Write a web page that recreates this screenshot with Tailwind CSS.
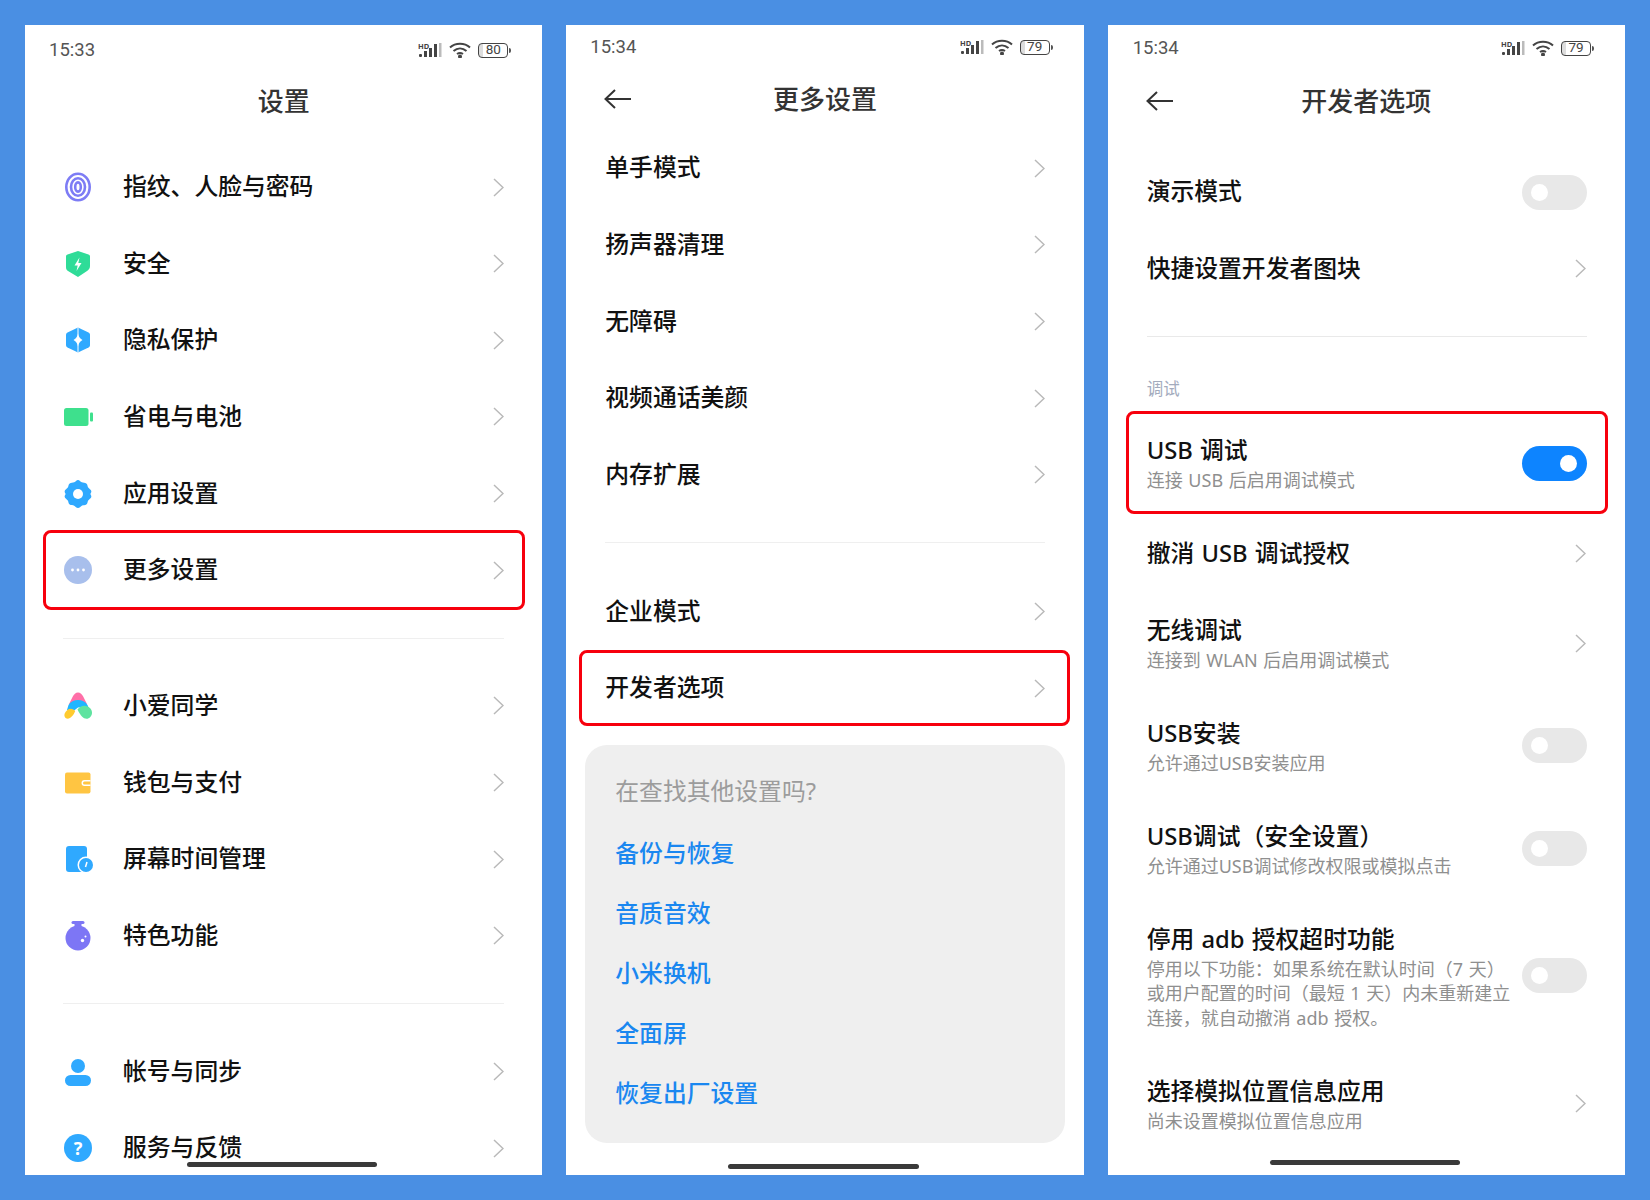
<!DOCTYPE html>
<html lang="zh-CN">
<head>
  <meta charset="UTF-8" />
  <meta name="viewport" content="width=device-width, initial-scale=1.0" />
  <title>设置 - 开发者选项</title>
  <script src="https://cdn.jsdelivr.net/npm/@tailwindcss/browser@4"></script>
</head>
<body class="bg-[#4a8fe3] font-['Noto_Sans','Noto_Sans_CJK_SC',sans-serif]">
<div class="flex gap-[24px] p-[25px] h-[1200px]">

  <!-- Panel 1: settings -->
  <section class="relative flex-1 h-[1150px] bg-white overflow-hidden">
    <div class="flex items-center justify-between h-[50px] pl-[24px] pr-[31px]">
      <span class="font-['Roboto'] text-[18.5px] text-[#555] translate-y-[1px]">15:33</span>
      <div class="flex items-center gap-[7px]">
        <svg width="24" height="16" viewBox="0 0 24 16"><text x="0" y="7" font-size="7.5" font-weight="700" fill="#444">HD</text><g fill="#444"><rect x="1" y="12" width="3" height="3" rx="1"/><rect x="6" y="9" width="3" height="6"/><rect x="11" y="6" width="3" height="9"/><rect x="16" y="2" width="3" height="13"/></g><rect x="21" y="1" width="2.5" height="14" fill="#bbb"/></svg>
        <svg width="22" height="16" viewBox="0 0 22 16" fill="none" stroke="#444" stroke-width="2"><path d="M1 5.5C6.5 .5 15.5 .5 21 5.5"/><path d="M4.5 9C8.5 5.5 13.5 5.5 17.5 9"/><path d="M8 12C9.8 10.7 12.2 10.7 14 12"/><circle cx="11" cy="14.5" r="1" fill="#444"/></svg>
        <div class="flex items-center">
          <div class="flex items-center justify-center w-[30px] h-[15px] rounded-[4px] border border-[#444] bg-[linear-gradient(90deg,#ddd_0,#ddd_15%,#fff_15%)] font-['Roboto'] text-[13.5px] leading-none text-[#444]">80</div>
          <div class="w-[2px] h-[5px] bg-[#555] rounded-r-sm ml-[1px]"></div>
        </div>
      </div>
    </div>
    <header class="flex items-center justify-center h-[52px] text-[26px] font-medium text-[#333]">设置</header>

    <div class="mt-[21.7px]">
      <div class="flex items-center h-[76.67px] px-[38px]">
        <svg class="w-[30px] h-[30px] shrink-0" viewBox="0 0 30 30" fill="none" stroke="#7d7cf5" stroke-width="2.6"><ellipse cx="15" cy="15" rx="11.7" ry="13.3"/><ellipse cx="15" cy="15" rx="7" ry="8.8"/><ellipse cx="15" cy="15" rx="2.8" ry="4.6"/></svg>
        <span class="ml-[30px] flex-1 text-[23.8px] font-medium text-[#111]">指纹、人脸与密码</span>
        <svg class="w-[11px] h-[19px] shrink-0" viewBox="0 0 11 19" fill="none" stroke="#b9b9b9" stroke-width="1.5"><path d="M1 1l9 8.5-9 8.5"/></svg>
      </div>
      <div class="flex items-center h-[76.67px] px-[38px]">
        <svg class="w-[30px] h-[30px] shrink-0" viewBox="0 0 30 30"><path d="M15 2l10.5 3.6c.9.3 1.5 1.1 1.5 2V17c0 2-1 3.6-2.6 4.8L15 28 4.6 21.8C3 20.6 3 19 3 17V7.6c0-.9.6-1.7 1.5-2z" fill="#2fdc98"/><path d="M16.5 8.5l-5 8h3.2l-1.2 5.5 5-8h-3.2z" fill="#fff"/></svg>
        <span class="ml-[30px] flex-1 text-[23.8px] font-medium text-[#111]">安全</span>
        <svg class="w-[11px] h-[19px] shrink-0" viewBox="0 0 11 19" fill="none" stroke="#b9b9b9" stroke-width="1.5"><path d="M1 1l9 8.5-9 8.5"/></svg>
      </div>
      <div class="flex items-center h-[76.67px] px-[38px]">
        <svg class="w-[30px] h-[30px] shrink-0" viewBox="0 0 30 30"><path d="M15 2.5l10.5 5c1 .5 1.5 1.3 1.5 2.4v10.2c0 1.1-.5 1.9-1.5 2.4L15 27.5 4.5 22.5C3.5 22 3 21.2 3 20.1V9.9c0-1.1.5-1.9 1.5-2.4z" fill="#2fa9ff"/><path d="M15 2.5v25" stroke="#fff" stroke-width="1"/><path d="M15 8.5c.5 3 1.8 5 4.5 6.5-2.7 1.5-4 3.5-4.5 6.5-.5-3-1.8-5-4.5-6.5 2.7-1.5 4-3.5 4.5-6.5z" fill="#fff"/></svg>
        <span class="ml-[30px] flex-1 text-[23.8px] font-medium text-[#111]">隐私保护</span>
        <svg class="w-[11px] h-[19px] shrink-0" viewBox="0 0 11 19" fill="none" stroke="#b9b9b9" stroke-width="1.5"><path d="M1 1l9 8.5-9 8.5"/></svg>
      </div>
      <div class="flex items-center h-[76.67px] px-[38px]">
        <svg class="w-[30px] h-[30px] shrink-0" viewBox="0 0 30 30"><rect x="1" y="6" width="24.5" height="18" rx="2.5" fill="#3ee08d"/><rect x="27" y="10.5" width="3" height="9" rx="1" fill="#3ee08d"/></svg>
        <span class="ml-[30px] flex-1 text-[23.8px] font-medium text-[#111]">省电与电池</span>
        <svg class="w-[11px] h-[19px] shrink-0" viewBox="0 0 11 19" fill="none" stroke="#b9b9b9" stroke-width="1.5"><path d="M1 1l9 8.5-9 8.5"/></svg>
      </div>
      <div class="flex items-center h-[76.67px] px-[38px]">
        <svg class="w-[30px] h-[30px] shrink-0" viewBox="0 0 30 30"><path d="M15 1c1.6 0 2.4 1.6 3.8 2.3 1.4.7 3.2.2 4.5 1.100 1.3.9 1.100 2.700 1.900 4.100.8 1.300 2.800 1.900 3.100 3.500.3 1.600-.8 2-.8 3s1.100 1.400.8 3c-.3 1.600-2.300 2.200-3.100 3.500-.8 1.400-.6 3.200-1.900 4.100-1.300.9-3.100.4-4.500 1.100C17.400 27.400 16.600 29 15 29s-2.400-1.600-3.800-2.300c-1.400-.7-3.200-.2-4.500-1.100-1.300-.9-1.100-2.700-1.900-4.100-.8-1.300-2.800-1.900-3.100-3.500-.3-1.600.8-2 .8-3s-1.100-1.400-.8-3c.3-1.600 2.300-2.200 3.100-3.500.8-1.400.6-3.200 1.900-4.100 1.300-.9 3.100-.4 4.500-1.100C12.600 2.600 13.400 1 15 1z" fill="#2fa9ff"/><circle cx="15" cy="15" r="5" fill="#fff"/></svg>
        <span class="ml-[30px] flex-1 text-[23.8px] font-medium text-[#111]">应用设置</span>
        <svg class="w-[11px] h-[19px] shrink-0" viewBox="0 0 11 19" fill="none" stroke="#b9b9b9" stroke-width="1.5"><path d="M1 1l9 8.5-9 8.5"/></svg>
      </div>
      <div class="relative flex items-center h-[76.67px] px-[38px]">
        <svg class="w-[30px] h-[30px] shrink-0" viewBox="0 0 30 30"><circle cx="15" cy="15" r="14" fill="#a8bfec"/><circle cx="9.5" cy="15" r="1.4" fill="#fff"/><circle cx="15" cy="15" r="1.4" fill="#fff"/><circle cx="20.5" cy="15" r="1.4" fill="#fff"/></svg>
        <span class="ml-[30px] flex-1 text-[23.8px] font-medium text-[#111]">更多设置</span>
        <svg class="w-[11px] h-[19px] shrink-0" viewBox="0 0 11 19" fill="none" stroke="#b9b9b9" stroke-width="1.5"><path d="M1 1l9 8.5-9 8.5"/></svg>
        <div class="absolute top-[-2px] bottom-[-1.5px] left-[18px] right-[17px] border-[3px] border-[#f7000d] rounded-[8px]"></div>
      </div>
    </div>

    <div class="mt-[29px] mx-[38px] h-px bg-[#efefef]"></div>

    <div class="mt-[29px]">
      <div class="flex items-center h-[76.67px] px-[38px]">
        <svg class="w-[30px] h-[30px] shrink-0" viewBox="0 0 30 30"><path d="M15 1.5c2.4 0 4 1.7 5.2 4l4 8-18.4 0 4-8c1.2-2.3 2.8-4 5.2-4z" fill="#ff6fa8"/><path d="M5.5 14c2-3.5 5.5-5 9.5-5s7.5 1.5 9.5 5l1.5 3.5-6-1.5-5 .5-4.5 3.5-6.5-1z" fill="#1fb6ff"/><path d="M14.5 18.5c2-2.6 4.2-3.8 6.8-3.8 4 0 7.7 3 7.7 7 0 3.3-2.6 6-5.5 6-3.2 0-6-3-9-9.2z" fill="#5fe3a0"/><path d="M1.7 22.5c1-2.7 3.5-4.8 6-4.8 2 0 3.5 1 4.5 2.3-1.5 4-4.5 7.7-7.5 7.7-2.6 0-3.9-2.5-3-5.2z" fill="#ffcb2f"/></svg>
        <span class="ml-[30px] flex-1 text-[23.8px] font-medium text-[#111]">小爱同学</span>
        <svg class="w-[11px] h-[19px] shrink-0" viewBox="0 0 11 19" fill="none" stroke="#b9b9b9" stroke-width="1.5"><path d="M1 1l9 8.5-9 8.5"/></svg>
      </div>
      <div class="flex items-center h-[76.67px] px-[38px]">
        <svg class="w-[30px] h-[30px] shrink-0" viewBox="0 0 30 30"><rect x="2" y="4.5" width="25.5" height="21" rx="2" fill="#ffc542"/><path d="M27.5 12h-6a3 3 0 0 0 0 6h6v-1.5h-6a1.5 1.5 0 0 1 0-3h6z" fill="#fff"/></svg>
        <span class="ml-[30px] flex-1 text-[23.8px] font-medium text-[#111]">钱包与支付</span>
        <svg class="w-[11px] h-[19px] shrink-0" viewBox="0 0 11 19" fill="none" stroke="#b9b9b9" stroke-width="1.5"><path d="M1 1l9 8.5-9 8.5"/></svg>
      </div>
      <div class="flex items-center h-[76.67px] px-[38px]">
        <svg class="w-[30px] h-[30px] shrink-0" viewBox="0 0 30 30"><rect x="3" y="2" width="21" height="26" rx="3" fill="#2fa9ff"/><circle cx="23" cy="21" r="8.5" fill="#fff"/><circle cx="23" cy="21" r="7" fill="#2fa9ff"/><path d="M24 18l-1.5 5" stroke="#fff" stroke-width="1.5" fill="none"/></svg>
        <span class="ml-[30px] flex-1 text-[23.8px] font-medium text-[#111]">屏幕时间管理</span>
        <svg class="w-[11px] h-[19px] shrink-0" viewBox="0 0 11 19" fill="none" stroke="#b9b9b9" stroke-width="1.5"><path d="M1 1l9 8.5-9 8.5"/></svg>
      </div>
      <div class="flex items-center h-[76.67px] px-[38px]">
        <svg class="w-[30px] h-[30px] shrink-0" viewBox="0 0 30 30"><rect x="8.5" y="0" width="13" height="3" rx="1.5" fill="#7d76f5"/><rect x="11.5" y="2" width="7" height="6" fill="#7d76f5"/><circle cx="15" cy="17" r="12.5" fill="#7d76f5"/><circle cx="19.5" cy="19.5" r="1.7" fill="#fff"/><circle cx="22.5" cy="15.5" r="1" fill="#fff"/></svg>
        <span class="ml-[30px] flex-1 text-[23.8px] font-medium text-[#111]">特色功能</span>
        <svg class="w-[11px] h-[19px] shrink-0" viewBox="0 0 11 19" fill="none" stroke="#b9b9b9" stroke-width="1.5"><path d="M1 1l9 8.5-9 8.5"/></svg>
      </div>
    </div>

    <div class="mt-[29px] mx-[38px] h-px bg-[#efefef]"></div>

    <div class="mt-[29px]">
      <div class="flex items-center h-[76.67px] px-[38px]">
        <svg class="w-[30px] h-[30px] shrink-0" viewBox="0 0 30 30"><circle cx="15" cy="9" r="7" fill="#2fa9ff"/><rect x="2" y="18" width="26" height="11" rx="5.5" fill="#2fa9ff"/></svg>
        <span class="ml-[30px] flex-1 text-[23.8px] font-medium text-[#111]">帐号与同步</span>
        <svg class="w-[11px] h-[19px] shrink-0" viewBox="0 0 11 19" fill="none" stroke="#b9b9b9" stroke-width="1.5"><path d="M1 1l9 8.5-9 8.5"/></svg>
      </div>
      <div class="flex items-center h-[76.67px] px-[38px]">
        <svg class="w-[30px] h-[30px] shrink-0" viewBox="0 0 30 30"><circle cx="15" cy="15" r="14" fill="#2fa9ff"/><text x="15" y="21.5" text-anchor="middle" font-size="18" font-weight="700" fill="#fff">?</text></svg>
        <span class="ml-[30px] flex-1 text-[23.8px] font-medium text-[#111]">服务与反馈</span>
        <svg class="w-[11px] h-[19px] shrink-0" viewBox="0 0 11 19" fill="none" stroke="#b9b9b9" stroke-width="1.5"><path d="M1 1l9 8.5-9 8.5"/></svg>
      </div>
    </div>
    <div class="absolute bottom-[8px] left-[162px] w-[190px] h-[5px] rounded-full bg-[#3a3a3a]"></div>
  </section>

  <!-- Panel 2: more settings -->
  <section class="relative flex-1 h-[1150px] bg-white overflow-hidden">
    <div class="flex items-center justify-between h-[44px] pl-[24px] pr-[31px]">
      <span class="font-['Roboto'] text-[18.5px] text-[#555] translate-y-[1px]">15:34</span>
      <div class="flex items-center gap-[7px]">
        <svg width="24" height="16" viewBox="0 0 24 16"><text x="0" y="7" font-size="7.5" font-weight="700" fill="#444">HD</text><g fill="#444"><rect x="1" y="12" width="3" height="3" rx="1"/><rect x="6" y="9" width="3" height="6"/><rect x="11" y="6" width="3" height="9"/><rect x="16" y="2" width="3" height="13"/></g><rect x="21" y="1" width="2.5" height="14" fill="#bbb"/></svg>
        <svg width="22" height="16" viewBox="0 0 22 16" fill="none" stroke="#444" stroke-width="2"><path d="M1 5.5C6.5 .5 15.5 .5 21 5.5"/><path d="M4.5 9C8.5 5.5 13.5 5.5 17.5 9"/><path d="M8 12C9.8 10.7 12.2 10.7 14 12"/><circle cx="11" cy="14.5" r="1" fill="#444"/></svg>
        <div class="flex items-center">
          <div class="flex items-center justify-center w-[30px] h-[15px] rounded-[4px] border border-[#444] bg-[linear-gradient(90deg,#ddd_0,#ddd_15%,#fff_15%)] font-['Roboto'] text-[13.5px] leading-none text-[#444]">79</div>
          <div class="w-[2px] h-[5px] bg-[#555] rounded-r-sm ml-[1px]"></div>
        </div>
      </div>
    </div>
    <header class="grid grid-cols-[1fr_auto_1fr] items-center h-[60px] pl-[38px] text-[26px] font-medium text-[#333]">
      <svg class="w-[28px] h-[20px]" viewBox="0 0 28 20" fill="none" stroke="#333" stroke-width="2"><path d="M27 10H2M11 1l-9.5 9 9.5 9"/></svg>
      <span class="-ml-[38px]">更多设置</span>
    </header>

    <div class="mt-[1px]">
      <div class="flex items-center justify-between h-[76.67px] px-[39px] text-[23.8px] font-medium text-[#111]">单手模式
        <svg class="w-[11px] h-[19px]" viewBox="0 0 11 19" fill="none" stroke="#b9b9b9" stroke-width="1.5"><path d="M1 1l9 8.5-9 8.5"/></svg>
      </div>
      <div class="flex items-center justify-between h-[76.67px] px-[39px] text-[23.8px] font-medium text-[#111]">扬声器清理
        <svg class="w-[11px] h-[19px]" viewBox="0 0 11 19" fill="none" stroke="#b9b9b9" stroke-width="1.5"><path d="M1 1l9 8.5-9 8.5"/></svg>
      </div>
      <div class="flex items-center justify-between h-[76.67px] px-[39px] text-[23.8px] font-medium text-[#111]">无障碍
        <svg class="w-[11px] h-[19px]" viewBox="0 0 11 19" fill="none" stroke="#b9b9b9" stroke-width="1.5"><path d="M1 1l9 8.5-9 8.5"/></svg>
      </div>
      <div class="flex items-center justify-between h-[76.67px] px-[39px] text-[23.8px] font-medium text-[#111]">视频通话美颜
        <svg class="w-[11px] h-[19px]" viewBox="0 0 11 19" fill="none" stroke="#b9b9b9" stroke-width="1.5"><path d="M1 1l9 8.5-9 8.5"/></svg>
      </div>
      <div class="flex items-center justify-between h-[76.67px] px-[39px] text-[23.8px] font-medium text-[#111]">内存扩展
        <svg class="w-[11px] h-[19px]" viewBox="0 0 11 19" fill="none" stroke="#b9b9b9" stroke-width="1.5"><path d="M1 1l9 8.5-9 8.5"/></svg>
      </div>
    </div>

    <div class="mt-[29px] mx-[39px] h-px bg-[#efefef]"></div>

    <div class="mt-[30px]">
      <div class="flex items-center justify-between h-[76.67px] px-[39px] text-[23.8px] font-medium text-[#111]">企业模式
        <svg class="w-[11px] h-[19px]" viewBox="0 0 11 19" fill="none" stroke="#b9b9b9" stroke-width="1.5"><path d="M1 1l9 8.5-9 8.5"/></svg>
      </div>
      <div class="relative flex items-center justify-between h-[76.67px] px-[39px] text-[23.8px] font-medium text-[#111]">开发者选项
        <svg class="w-[11px] h-[19px]" viewBox="0 0 11 19" fill="none" stroke="#b9b9b9" stroke-width="1.5"><path d="M1 1l9 8.5-9 8.5"/></svg>
        <div class="absolute top-0 bottom-[1px] left-[13px] right-[14px] border-[3px] border-[#f7000d] rounded-[8px]"></div>
      </div>
    </div>

    <div class="mt-[18.5px] ml-[19px] mr-[19px] h-[398px] pt-[17px] rounded-[22px] bg-[#efefef] px-[30px] text-[23.8px] font-medium text-[#1a87f0]">
      <div class="flex items-center h-[60px] mb-[1.5px] font-normal text-[#9c9c9c]">在查找其他设置吗?</div>
      <div class="flex items-center h-[60px]">备份与恢复</div>
      <div class="flex items-center h-[60px]">音质音效</div>
      <div class="flex items-center h-[60px]">小米换机</div>
      <div class="flex items-center h-[60px]">全面屏</div>
      <div class="flex items-center h-[60px]">恢复出厂设置</div>
    </div>
    <div class="absolute bottom-[6px] left-[162px] w-[191px] h-[5px] rounded-full bg-[#3a3a3a]"></div>
  </section>

  <!-- Panel 3: developer options -->
  <section class="relative flex-1 h-[1150px] bg-white overflow-hidden [word-spacing:1px]">
    <div class="flex items-center justify-between h-[46px] pl-[25px] pr-[31px]">
      <span class="font-['Roboto'] text-[18.5px] text-[#555] translate-y-[1px]">15:34</span>
      <div class="flex items-center gap-[7px]">
        <svg width="24" height="16" viewBox="0 0 24 16"><text x="0" y="7" font-size="7.5" font-weight="700" fill="#444">HD</text><g fill="#444"><rect x="1" y="12" width="3" height="3" rx="1"/><rect x="6" y="9" width="3" height="6"/><rect x="11" y="6" width="3" height="9"/><rect x="16" y="2" width="3" height="13"/></g><rect x="21" y="1" width="2.5" height="14" fill="#bbb"/></svg>
        <svg width="22" height="16" viewBox="0 0 22 16" fill="none" stroke="#444" stroke-width="2"><path d="M1 5.5C6.5 .5 15.5 .5 21 5.5"/><path d="M4.5 9C8.5 5.5 13.5 5.5 17.5 9"/><path d="M8 12C9.8 10.7 12.2 10.7 14 12"/><circle cx="11" cy="14.5" r="1" fill="#444"/></svg>
        <div class="flex items-center">
          <div class="flex items-center justify-center w-[30px] h-[15px] rounded-[4px] border border-[#444] bg-[linear-gradient(90deg,#ddd_0,#ddd_15%,#fff_15%)] font-['Roboto'] text-[13.5px] leading-none text-[#444]">79</div>
          <div class="w-[2px] h-[5px] bg-[#555] rounded-r-sm ml-[1px]"></div>
        </div>
      </div>
    </div>
    <header class="grid grid-cols-[1fr_auto_1fr] items-center h-[60px] pl-[38px] text-[26px] font-medium text-[#333]">
      <svg class="w-[28px] h-[20px]" viewBox="0 0 28 20" fill="none" stroke="#333" stroke-width="2"><path d="M27 10H2M11 1l-9.5 9 9.5 9"/></svg>
      <span class="-ml-[38px]">开发者选项</span>
    </header>

    <div class="mt-[22.7px]">
      <div class="flex items-center justify-between h-[76.67px] pl-[39px] pr-[38px] text-[23.8px] font-medium text-[#111]">演示模式
        <div class="flex items-center justify-start w-[65px] h-[35px] px-[9.5px] rounded-full bg-[#e8e8e8]"><div class="w-[17px] h-[17px] rounded-full bg-white"></div></div>
      </div>
      <div class="flex items-center justify-between h-[76.67px] pl-[39px] pr-[39px] text-[23.8px] font-medium text-[#111]">快捷设置开发者图块
        <svg class="w-[11px] h-[19px]" viewBox="0 0 11 19" fill="none" stroke="#b9b9b9" stroke-width="1.5"><path d="M1 1l9 8.5-9 8.5"/></svg>
      </div>
    </div>

    <div class="mt-[28.5px] ml-[39px] mr-[38px] h-px bg-[#e9e9e9]"></div>
    <div class="mt-[40.5px] pl-[39px] h-[24px] leading-[24px] text-[16.5px] text-[#a3abbd]">调试</div>

    <div class="mt-[12px]">
      <div class="relative flex items-center justify-between py-[22px] pl-[39px] pr-[38px]">
        <div class="-translate-y-[1px]">
          <div class="text-[23.8px] leading-[32px] font-medium text-[#111]">USB 调试</div>
          <div class="mt-[2px] text-[18px] leading-[24px] text-[#8f8f8f]">连接 USB 后启用调试模式</div>
        </div>
        <div class="flex items-center justify-end w-[65px] h-[35px] px-[9.5px] rounded-full bg-[#0d84ff] -translate-y-[1px]"><div class="w-[17px] h-[17px] rounded-full bg-white"></div></div>
        <div class="absolute -top-[2px] bottom-[1px] left-[18px] right-[17px] border-[3px] border-[#f7000d] rounded-[8px]"></div>
      </div>
      <div class="flex items-center justify-between h-[77px] pl-[39px] pr-[39px] text-[23.8px] font-medium text-[#111]">撤消 USB 调试授权
        <svg class="w-[11px] h-[19px]" viewBox="0 0 11 19" fill="none" stroke="#b9b9b9" stroke-width="1.5"><path d="M1 1l9 8.5-9 8.5"/></svg>
      </div>
      <div class="flex items-center justify-between py-[22px] pl-[39px] pr-[39px]">
        <div>
          <div class="text-[23.8px] leading-[32px] font-medium text-[#111]">无线调试</div>
          <div class="mt-[2px] text-[18px] leading-[24px] text-[#8f8f8f]">连接到 WLAN 后启用调试模式</div>
        </div>
        <svg class="w-[11px] h-[19px]" viewBox="0 0 11 19" fill="none" stroke="#b9b9b9" stroke-width="1.5"><path d="M1 1l9 8.5-9 8.5"/></svg>
      </div>
      <div class="flex items-center justify-between py-[22.5px] pl-[39px] pr-[38px]">
        <div>
          <div class="text-[23.8px] leading-[32px] font-medium text-[#111]">USB安装</div>
          <div class="mt-[2px] text-[18px] leading-[24px] text-[#8f8f8f]">允许通过USB安装应用</div>
        </div>
        <div class="flex items-center justify-start w-[65px] h-[35px] px-[9.5px] rounded-full bg-[#e8e8e8]"><div class="w-[17px] h-[17px] rounded-full bg-white"></div></div>
      </div>
      <div class="flex items-center justify-between py-[22.5px] pl-[39px] pr-[38px]">
        <div>
          <div class="text-[23.8px] leading-[32px] font-medium text-[#111]">USB调试&#xFF08;安全设置&#xFF09;</div>
          <div class="mt-[2px] text-[18px] leading-[24px] text-[#8f8f8f]">允许通过USB调试修改权限或模拟点击</div>
        </div>
        <div class="flex items-center justify-start w-[65px] h-[35px] px-[9.5px] rounded-full bg-[#e8e8e8]"><div class="w-[17px] h-[17px] rounded-full bg-white"></div></div>
      </div>
      <div class="flex items-center justify-between py-[22.5px] pl-[39px] pr-[38px]">
        <div>
          <div class="text-[23.8px] leading-[32px] font-medium text-[#111]">停用 adb 授权超时功能</div>
          <div class="mt-[2px] text-[18px] leading-[24.5px] text-[#8f8f8f] whitespace-nowrap">停用以下功能&#xFF1A;如果系统在默认时间&#xFF08;7 天&#xFF09;<br>或用户配置的时间&#xFF08;最短 1 天&#xFF09;内未重新建立<br>连接&#xFF0C;就自动撤消 adb 授权。</div>
        </div>
        <div class="flex items-center justify-start w-[65px] h-[35px] px-[9.5px] rounded-full bg-[#e8e8e8] -translate-y-[1px]"><div class="w-[17px] h-[17px] rounded-full bg-white"></div></div>
      </div>
      <div class="flex items-center justify-between py-[22.5px] pl-[39px] pr-[39px]">
        <div>
          <div class="text-[23.8px] leading-[32px] font-medium text-[#111]">选择模拟位置信息应用</div>
          <div class="mt-[2px] text-[18px] leading-[24px] text-[#8f8f8f]">尚未设置模拟位置信息应用</div>
        </div>
        <svg class="w-[11px] h-[19px] -translate-y-[1px]" viewBox="0 0 11 19" fill="none" stroke="#b9b9b9" stroke-width="1.5"><path d="M1 1l9 8.5-9 8.5"/></svg>
      </div>
    </div>
    <div class="absolute bottom-[10px] left-[162px] w-[190px] h-[5px] rounded-full bg-[#3a3a3a]"></div>
  </section>

</div>
</body>
</html>
